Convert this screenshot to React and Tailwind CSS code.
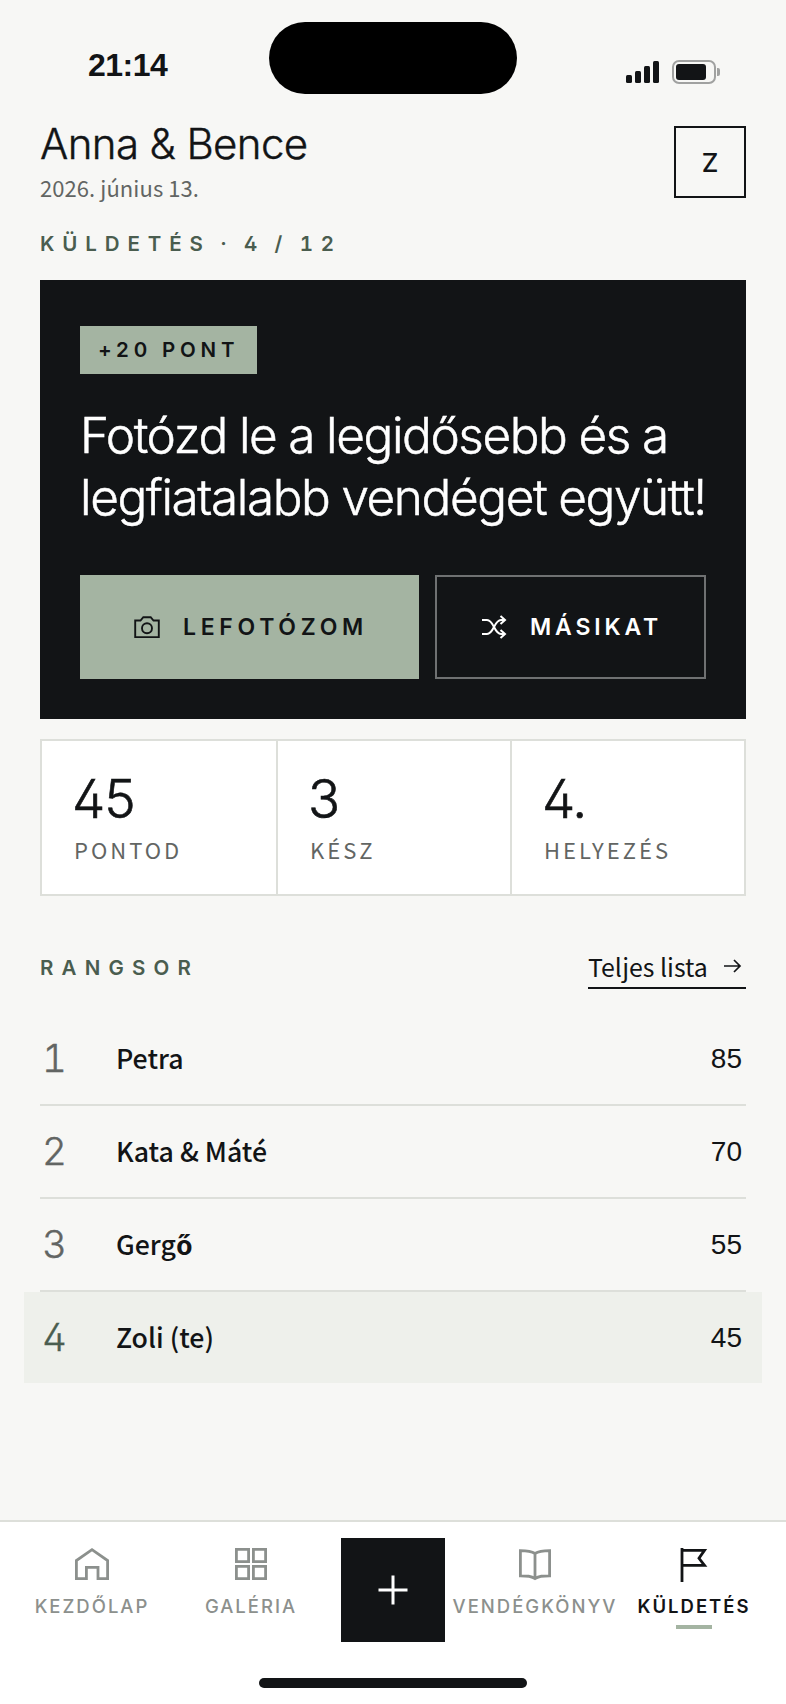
import React, { useState } from 'react';

const stats = [
  { value: '45', label: 'PONTOD', width: 'w-[236px] border-r-2' },
  { value: '3', label: 'KÉSZ', width: 'w-[234px] border-r-2' },
  { value: '4.', label: 'HELYEZÉS', width: 'flex-1' },
];

const ranking = [
  { place: 1, name: 'Petra', points: 85 },
  { place: 2, name: 'Kata & Máté', points: 70 },
  { place: 3, name: <>Gerg<b>ő</b></>, points: 55 },
  { place: 4, name: 'Zoli (te)', points: 45, me: true },
];

const display = "font-['Inter','Liberation_Sans',sans-serif]";
const numeric = "font-['Liberation_Sans',sans-serif]";
const body = "font-['Noto_Sans_CJK_SC','Noto_Sans',sans-serif]";

const StatusBar = () => (
  <div className="flex h-[120px] justify-between pl-[88px] pr-[66px]">
    <div className={`mt-[45px] w-[181px] text-[32px] leading-10 font-bold tracking-[-0.5px] ${numeric}`}>
      21:14
    </div>
    <div className="mt-[22px] h-[72px] w-[248px] rounded-full bg-black"></div>
    <svg className="mt-[59px] ml-[109px] h-[26px] w-[94px] shrink-0" viewBox="0 0 94 26">
      <g fill="#121416">
        <rect x="0" y="16" width="6" height="8" rx="1.5" />
        <rect x="9" y="12" width="6" height="12" rx="1.5" />
        <rect x="18" y="7" width="6" height="17" rx="1.5" />
        <rect x="27" y="2" width="6" height="22" rx="1.5" />
        <rect x="50" y="5" width="30" height="16" rx="3" />
      </g>
      <rect x="47" y="2" width="42" height="22" rx="6" fill="none" stroke="#a0a1a0" strokeWidth="2" />
      <path d="M91 9h1a2 2 0 0 1 2 2v4a2 2 0 0 1-2 2h-1z" fill="#a0a1a0" />
    </svg>
  </div>
);

const Header = () => (
  <header className="flex h-[109px] items-start justify-between">
    <div>
      <h1 className="text-[42px] leading-12 font-light tracking-[-0.6px] [-webkit-text-stroke:0.4px]">
        Anna &amp; Bence
      </h1>
      <p className={`mt-[3px] text-[22px] leading-8 tracking-[0.07px] text-[#626563] ${body}`}>
        2026. június 13.
      </p>
    </div>
    <div className="mt-1.5 flex size-[72px] items-center justify-center border-2 border-[#121416] text-[26px] font-medium">
      Z
    </div>
  </header>
);

const MissionCard = () => (
  <section className="mt-[22px] h-[439px] bg-[#121416] px-10 pt-[46px]">
    <div className="flex h-12 w-[177px] items-center bg-[#a4b4a2] pl-[18px] text-[20.5px] font-semibold tracking-[4.8px] whitespace-nowrap">
      +20 PONT
    </div>
    <h2 className="mt-[30px] mb-[47px] text-[49.5px] leading-[62px] font-light tracking-[-1.42px] whitespace-nowrap text-white [-webkit-text-stroke:0.5px] [word-spacing:-0.5px]">
      Fotózd le a legidősebb és a
      <br />
      legfiatalabb vendéget együtt!
    </h2>
    <div className="flex h-[104px] gap-4">
      <button className="flex w-[339px] items-center bg-[#a4b4a2] pl-[52px]">
        <svg className="size-[30px]" viewBox="0 0 30 30" fill="none" stroke="#121416" strokeWidth="1.9">
          <path d="M3.200 8.500h5.300l2.800-3.300h7.400l2.800 3.300h5.300v16.600H3.200z" />
          <circle cx="15" cy="16.2" r="5" />
        </svg>
        <span className="ml-[21px] text-[23px] font-semibold tracking-[4.7px]">LEFOTÓZOM</span>
      </button>
      <button className="flex flex-1 items-center border-2 border-[#6f7172] pl-[43px] text-white">
        <svg className="size-[30px]" viewBox="0 0 30 30" fill="none" stroke="currentColor" strokeWidth="2">
          <path d="M2 8h5c7 0 7 14 14 14h4M2 22h5c7 0 7-14 14-14h4M20.500 4l4.500 4-4.500 4M20.500 18l4.500 4-4.500 4" />
        </svg>
        <span className="ml-5 text-[23px] font-semibold tracking-[3.85px]">MÁSIKAT</span>
      </button>
    </div>
  </section>
);

const Stats = () => (
  <section className="mt-5 flex h-[157px] border-2 border-[#dddfda] bg-white">
    {stats.map((s) => (
      <div key={s.label} className={`border-[#dddfda] pt-7 pl-8 ${s.width}`}>
        <div className="-ml-0.5 text-[53px] leading-[60px] font-light tracking-[-1.2px] [-webkit-text-stroke:0.6px] [font-feature-settings:'cv02']">
          {s.value}
        </div>
        <div className={`mt-1 text-[22px] leading-8 tracking-[3px] text-[#626563] ${body}`}>{s.label}</div>
      </div>
    ))}
  </section>
);

const Ranking = () => (
  <section className="mt-[52px]">
    <div className="flex h-[41px] items-start justify-between">
      <h3 className="mt-1.5 text-[20.5px] leading-7 font-semibold tracking-[8.2px] text-[#4a5d4f]">RANGSOR</h3>
      <a className={`flex h-[41px] w-[158px] border-b-2 border-[#121416] text-[24.9px] leading-9 ${body}`}>
        <span className="whitespace-nowrap">Teljes lista</span>
        <svg className="mt-2 ml-auto h-5 w-6" viewBox="0 0 24 20" fill="none" stroke="currentColor" strokeWidth="1.7">
          <path d="M2 10h16M12 4l6 6-6 6" />
        </svg>
      </a>
    </div>
    <ul className="mt-6">
      {ranking.map((r) => (
        <li
          key={r.place}
          className={`flex items-center ${
            r.me ? '-mx-4 h-[91px] bg-[#eef0eb] px-5' : 'h-[93px] border-b-2 border-[#dddfda] px-1'
          }`}
        >
          <span
            className={`-ml-0.5 w-[74px] text-[38.5px] font-light [-webkit-text-stroke:0.4px] [font-feature-settings:'cv02','tnum'] ${
              r.me ? 'text-[#4a5d4f]' : 'text-[#626563]'
            }`}
          >
            {r.place}
          </span>
          <span className={`-mt-0.5 flex-1 text-[26.7px] leading-9 font-medium ${body}`}>{r.name}</span>
          <span className={`text-[28px] ${numeric}`}>{r.points}</span>
        </li>
      ))}
    </ul>
  </section>
);

const icons = {
  home: <path d="M3.400 34.600V16.500L19 5.600l15.600 10.900v18.100H25V23.400H13.400v11.200z" />,
  gallery: <path d="M4.400 5.400h12.200v12.200H4.400zM21.400 5.400h12.200v12.200H21.400zM4.400 22.400h12.200v12.200H4.400zM21.400 22.400h12.200v12.200H21.400z" />,
  book: <path d="M19 9.500C15 7 11 6.700 4.400 6.700v25.100c6.600 0 10.600 0 14.600 2.700 4-2.700 8-2.700 14.600-2.700V6.700C27 6.700 23 7 19 9.500zM19 9.500v25" />,
  flag: <path d="M7 4v34M7 6.300h22.500l-5.500 8 5.500 7H7" />,
};

const NavItem = ({ icon, label, active, onClick }) => (
  <button
    onClick={onClick}
    className={`flex flex-col items-center pt-[22px] ${active ? 'text-[#121416]' : 'text-[#8c908d]'}`}
  >
    <svg className="size-[38px]" viewBox="0 0 38 38" fill="none" stroke="currentColor" strokeWidth="2.8">
      {icons[icon]}
    </svg>
    <span
      className={`mt-3 text-[18.5px] leading-6 tracking-[2px] whitespace-nowrap ${
        active ? 'font-semibold' : 'font-medium'
      }`}
    >
      {label}
    </span>
    {active && <span className="mt-[7px] h-1 w-9 bg-[#a4b4a2]"></span>}
  </button>
);

const BottomNav = () => {
  const [tab, setTab] = useState('flag');

  return (
    <nav className="mt-auto h-[184px] border-t-2 border-[#dddfda] bg-white">
      <div className="grid h-[156px] grid-cols-[160px_158px_126px_158px_160px] items-start pl-3">
        <NavItem icon="home" label="KEZDŐLAP" active={tab === 'home'} onClick={() => setTab('home')} />
        <NavItem icon="gallery" label="GALÉRIA" active={tab === 'gallery'} onClick={() => setTab('gallery')} />
        <button className="mt-4 flex size-[104px] items-center justify-center justify-self-center bg-[#121416]">
          <svg className="size-[30px]" viewBox="0 0 30 30" stroke="white" strokeWidth="3">
            <path d="M15 0.500v29M0.500 15h29" />
          </svg>
        </button>
        <NavItem icon="book" label="VENDÉGKÖNYV" active={tab === 'book'} onClick={() => setTab('book')} />
        <NavItem icon="flag" label="KÜLDETÉS" active={tab === 'flag'} onClick={() => setTab('flag')} />
      </div>
      <div className="mx-auto h-2.5 w-[268px] rounded-full bg-[#121416]"></div>
    </nav>
  );
};

export default function App() {
  return (
    <div className={`flex h-[1704px] w-[786px] flex-col overflow-hidden bg-[#f7f7f5] text-[#121416] ${display}`}>
      <StatusBar />
      <main className="px-10">
        <Header />
        <p className="text-[20.5px] leading-[29px] font-semibold tracking-[7.9px] text-[#4a5d4f] [font-feature-settings:'cv02','tnum'] [word-spacing:-4px]">
          KÜLDETÉS · 4 / 12
        </p>
        <MissionCard />
        <Stats />
        <Ranking />
      </main>
      <BottomNav />
    </div>
  );
}
